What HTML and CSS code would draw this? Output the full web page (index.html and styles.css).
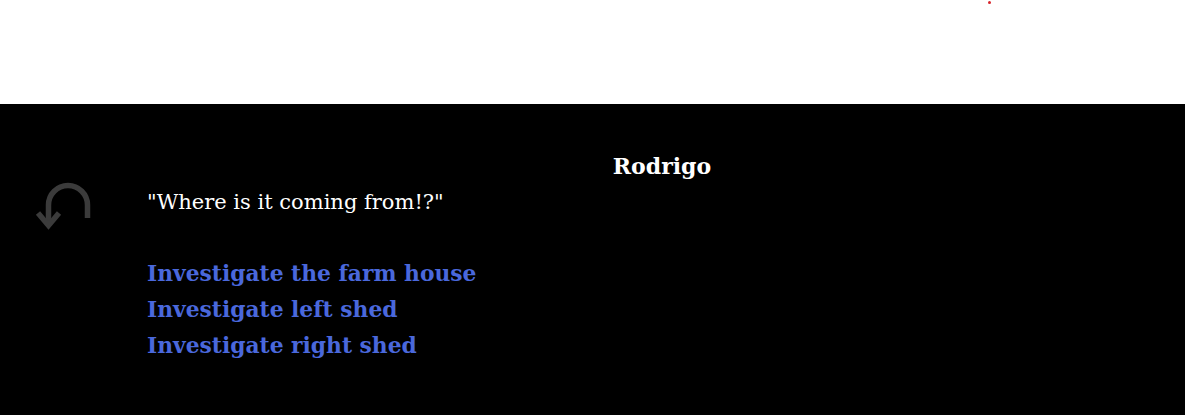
FILE: index.html
```html
<!DOCTYPE html>
<html>
<head>
<meta charset="utf-8">
<link rel="stylesheet" href="styles.css">
</head>
<body>
<div class="top">
  <span class="dot"></span>
</div>
<div class="stage">
  <div class="back">
    <svg width="60" height="54" viewBox="0 0 60 54">
      <path d="M54.5 40 V27 A19.5 19.5 0 0 0 15.5 27 V48" fill="none" stroke="#3b3b3b" stroke-width="5.5"/>
      <path d="M5 35 L15.5 47.5 L26 35" fill="none" stroke="#3b3b3b" stroke-width="5.5"/>
    </svg>
  </div>
  <div class="dialog">
    <div class="speaker">Rodrigo</div>
    <div class="line">"Where is it coming from!?"</div>
    <div class="choices">
      <a class="choice">Investigate the farm house</a>
      <a class="choice">Investigate left shed</a>
      <a class="choice">Investigate right shed</a>
    </div>
  </div>
</div>
</body>
</html>
```
FILE: styles.css
```css
html, body { margin: 0; padding: 0; background: #000; }
body { font-family: "DejaVu Serif", serif; }
.top { height: 104px; background: #fff; position: relative; }
.dot { position: absolute; left: 988px; top: 1px; width: 3px; height: 3px; background: #d8242a; border-radius: 50%; }
.stage { display: flex; background: #000; height: 311px; box-sizing: border-box; padding-top: 48px; }
.back { width: 147px; flex: none; padding-top: 26px; padding-left: 33px; box-sizing: border-box; }
.back svg { display: block; }
.dialog { flex: 1; padding-right: 8px; }
.speaker { text-align: center; color: #fff; font-weight: bold; font-size: 22px; line-height: 28px; }
.line { color: #fff; font-size: 21px; line-height: 28px; margin-top: 8px; }
.choices { margin-top: 40px; display: flex; flex-direction: column; }
.choice { color: #4a68dc; font-weight: bold; font-size: 21.8px; line-height: 36px; }
```
